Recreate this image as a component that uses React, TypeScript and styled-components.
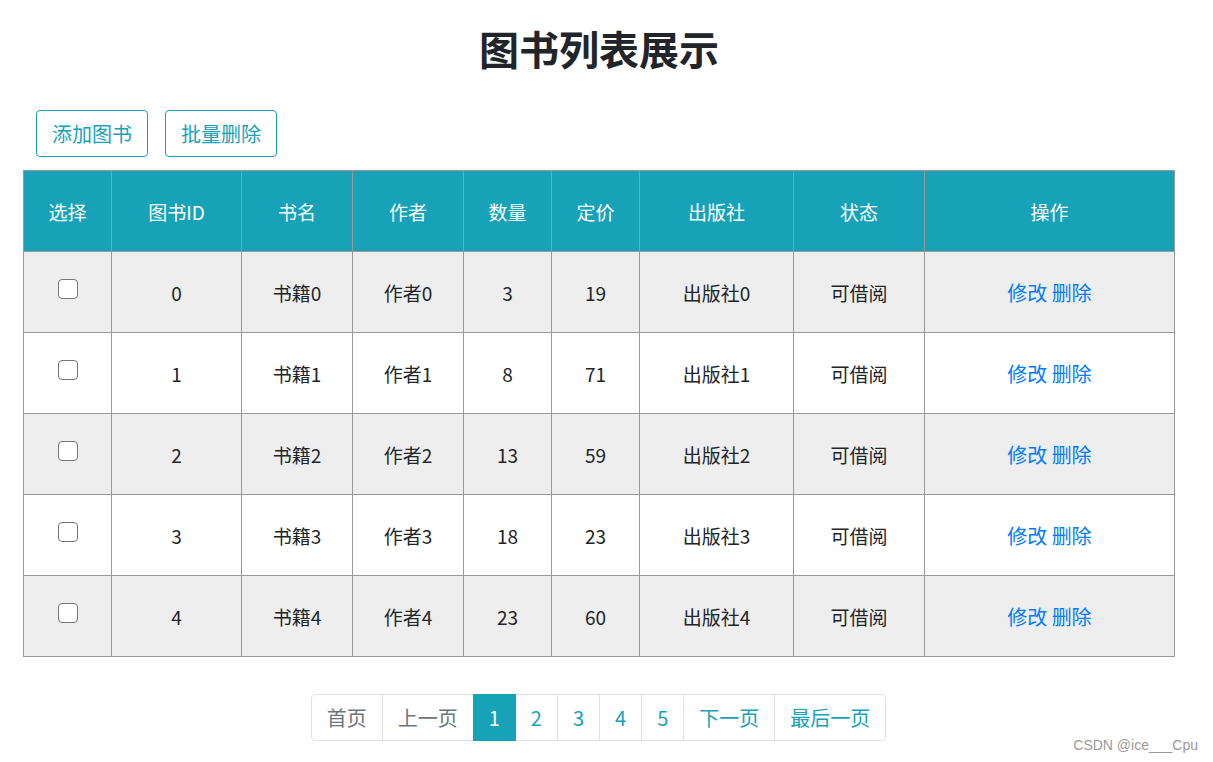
import React from 'react';
import styled, { createGlobalStyle } from 'styled-components';

const GlobalStyle = createGlobalStyle`
   body {
      margin: 0;
      background: #fff;
      font-family: 'Noto Sans CJK SC', 'Noto Sans', sans-serif;
      color: #212529;
   }
`;

const books = [0, 1, 2, 3, 4].map((i) => ({
   id: i,
   name: `书籍${i}`,
   author: `作者${i}`,
   count: [3, 8, 13, 18, 23][i],
   price: [19, 71, 59, 23, 60][i],
   publisher: `出版社${i}`,
   status: '可借阅',
}));

const widths = [88, 130, 111, 111, 88, 88, 154, 131, 250];
const heads = ['选择', '图书ID', '书名', '作者', '数量', '定价', '出版社', '状态', '操作'];
const pages = ['首页', '上一页', '1', '2', '3', '4', '5', '下一页', '最后一页'];

function App() {
   return (
      <Page>
         <GlobalStyle />
         <Title>图书列表展示</Title>
         <Container>
            <Toolbar>
               <OutlineButton>添加图书</OutlineButton>
               <OutlineButton>批量删除</OutlineButton>
            </Toolbar>
            <Table>
               <colgroup>
                  {widths.map((w, i) => (
                     <Col key={i} $w={w} />
                  ))}
               </colgroup>
               <thead>
                  <tr>
                     {heads.map((h) => (
                        <Th key={h}>{h}</Th>
                     ))}
                  </tr>
               </thead>
               <tbody>
                  {books.map((b) => (
                     <Row key={b.id} $striped={b.id % 2 === 0}>
                        <Td>
                           <Check type='checkbox' />
                        </Td>
                        <Td>{b.id}</Td>
                        <Td>{b.name}</Td>
                        <Td>{b.author}</Td>
                        <Td>{b.count}</Td>
                        <Td>{b.price}</Td>
                        <Td>{b.publisher}</Td>
                        <Td>{b.status}</Td>
                        <Td>
                           <Link>修改</Link> <Link>删除</Link>
                        </Td>
                     </Row>
                  ))}
               </tbody>
            </Table>
            <Pagination>
               {pages.map((p, i) => (
                  <PageItem
                     key={p}
                     $active={p === '1'}
                     $disabled={i < 2}
                     $first={i === 0}
                     $last={i === pages.length - 1}
                  >
                     {p}
                  </PageItem>
               ))}
            </Pagination>
         </Container>
         <Watermark>CSDN @ice___Cpu</Watermark>
      </Page>
   );
}

const Page = styled.div`
   position: relative;
   width: 1213px;
   height: 762px;
   padding-top: 24px;
   box-sizing: border-box;
`;

const Title = styled.h1`
   margin: 0;
   text-align: center;
   font-size: 40px;
   line-height: 48px;
   font-weight: bold;
   color: #212529;
   padding-right: 15px;
`;

const Container = styled.div`
   width: 1151px;
   margin: 38px 0 0 23px;
   display: flex;
   flex-direction: column;
`;

const Toolbar = styled.div`
   display: flex;
   gap: 17px;
   padding-left: 13px;
   margin-bottom: 13px;
`;

const OutlineButton = styled.button`
   height: 47px;
   padding: 0 15px;
   border: 1px solid #17a2b8;
   border-radius: 4px;
   background: #fff;
   color: #17a2b8;
   font-family: 'Noto Sans CJK SC', sans-serif;
   font-size: 20px;
   cursor: pointer;
`;

const Table = styled.table`
   width: 1151px;
   border-collapse: collapse;
   table-layout: fixed;
   font-size: 19px;
`;

const Col = styled.col<{ $w: number }>`
   width: ${(p) => p.$w}px;
`;

const Th = styled.th`
   height: 80px;
   background: #17a2b8;
   color: #fff;
   font-weight: normal;
   border: 1px solid #999;
   text-align: center;
   padding: 0;
`;

const Row = styled.tr<{ $striped: boolean }>`
   background: ${(p) => (p.$striped ? '#eeeeee' : '#fff')};
`;

const Td = styled.td`
   height: 80px;
   border: 1px solid #999;
   text-align: center;
   padding: 0;
   color: #212529;
`;

const Check = styled.input`
   appearance: none;
   width: 20px;
   height: 20px;
   margin: 0 0 9px;
   border: 1.5px solid #767676;
   border-radius: 4px;
   background: #fff;
   vertical-align: middle;
`;

const Link = styled.a`
   color: #007bff;
   font-size: 20px;
   cursor: pointer;
`;

const Pagination = styled.ul`
   display: flex;
   align-self: center;
   margin: 37px 0 0;
   padding: 0;
   list-style: none;
`;

const PageItem = styled.li<{
   $active: boolean;
   $disabled: boolean;
   $first: boolean;
   $last: boolean;
}>`
   height: 47px;
   box-sizing: border-box;
   padding: 0 15px;
   display: flex;
   align-items: center;
   font-size: 20px;
   border: 1px solid ${(p) => (p.$active ? '#17a2b8' : '#dee2e6')};
   margin-left: ${(p) => (p.$first ? '0' : '-1px')};
   border-radius: ${(p) =>
      p.$first ? '4px 0 0 4px' : p.$last ? '0 4px 4px 0' : '0'};
   background: ${(p) => (p.$active ? '#17a2b8' : '#fff')};
   color: ${(p) => (p.$active ? '#fff' : p.$disabled ? '#6c757d' : '#17a2b8')};
   position: relative;
   z-index: ${(p) => (p.$active ? 1 : 0)};
`;

const Watermark = styled.div`
   position: absolute;
   right: 15px;
   bottom: 9px;
   font-family: 'Liberation Sans', Arial, sans-serif;
   font-size: 14px;
   color: #999;
`;

export default App;
